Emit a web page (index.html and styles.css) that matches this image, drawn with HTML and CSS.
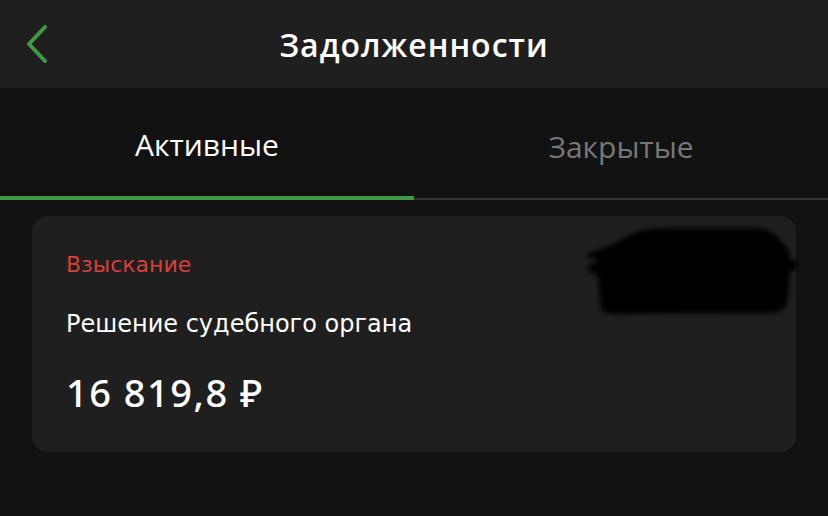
FILE: index.html
```html
<!DOCTYPE html>
<html lang="ru">
<head>
  <meta charset="UTF-8">
  <meta name="viewport" content="width=device-width, initial-scale=1.0">
  <title>Задолженности</title>
  <link rel="stylesheet" href="styles.css">
</head>
<body>
  <div class="header">
    <a class="back" href="#">
      <svg width="26" height="40" viewBox="0 0 26 40">
        <path d="M21 3 L5 20 L21 37" fill="none" stroke="#3f9a42" stroke-width="4" stroke-linecap="round" stroke-linejoin="round"/>
      </svg>
    </a>
    <h1>Задолженности</h1>
  </div>

  <div class="tabs">
    <div class="tab active">Активные</div>
    <div class="tab">Закрытые</div>
  </div>

  <div class="list">
    <div class="card">
      <p class="status">Взыскание</p>
      <p class="title">Решение судебного органа</p>
      <p class="amount">16 819,8 ₽</p>
      <svg class="redact" width="224" height="100" viewBox="0 0 224 100">
        <defs>
          <filter id="soft" x="-10%" y="-10%" width="120%" height="120%">
            <feGaussianBlur stdDeviation="2.5"/>
          </filter>
        </defs>
        <path filter="url(#soft)" fill="#000" d="M60 6 Q64 4 90 4 L172 4 Q184 4 192 12 L200 20 Q206 26 206 34 L212 38 Q218 42 210 46 L206 48 L204 76 Q202 88 188 89 L28 90 Q16 90 16 78 L14 52 L6 48 Q0 44 8 40 L14 36 L4 33 Q0 30 8 28 L30 20 Q46 10 60 6 Z"/>
      </svg>
    </div>
  </div>
</body>
</html>
```

FILE: styles.css
```css
body {
  margin: 0;
  background-color: #121212;
  font-family: "Open Sans", Arial, sans-serif;
  color: #fff;
  width: 828px;
  height: 516px;
  overflow: hidden;
}
.header {
  position: relative;
  height: 88px;
  background-color: #1f1f1f;
  display: flex;
  align-items: center;
  justify-content: center;
}
.back {
  position: absolute;
  left: 24px;
  top: 24px;
  display: block;
}
.header h1 {
  margin: 0;
  font-size: 32px;
  font-weight: 600;
  letter-spacing: 1px;
}
.tabs {
  display: flex;
  height: 112px;
}
.tab {
  flex: 1;
  display: flex;
  align-items: center;
  justify-content: center;
  font-size: 30px;
  color: #777;
  border-bottom: 2px solid #333;
  padding-top: 6px;
  box-sizing: border-box;
}
.tab.active {
  color: #fff;
  border-bottom: 4px solid #3f9a42;
  padding-top: 4px;
}
.list {
  padding: 16px 32px;
}
.card {
  position: relative;
  background-color: #1f1f1f;
  border-radius: 16px;
  height: 236px;
  padding: 34px 34px 0;
  box-sizing: border-box;
  font-family: "DejaVu Sans", "Noto Sans", sans-serif;
}
.card p {
  margin: 0;
}
.status {
  color: #d6403a;
  font-size: 22px;
  line-height: 30px;
}
.title {
  margin-top: 28px !important;
  font-size: 24px;
  line-height: 32px;
}
.amount {
  margin-top: 32px !important;
  font-family: "Noto Sans", sans-serif;
  font-size: 38px;
  font-weight: 500;
  letter-spacing: 1.5px;
  line-height: 40px;
}
.redact {
  position: absolute;
  left: 552px;
  top: 8px;
}
```
